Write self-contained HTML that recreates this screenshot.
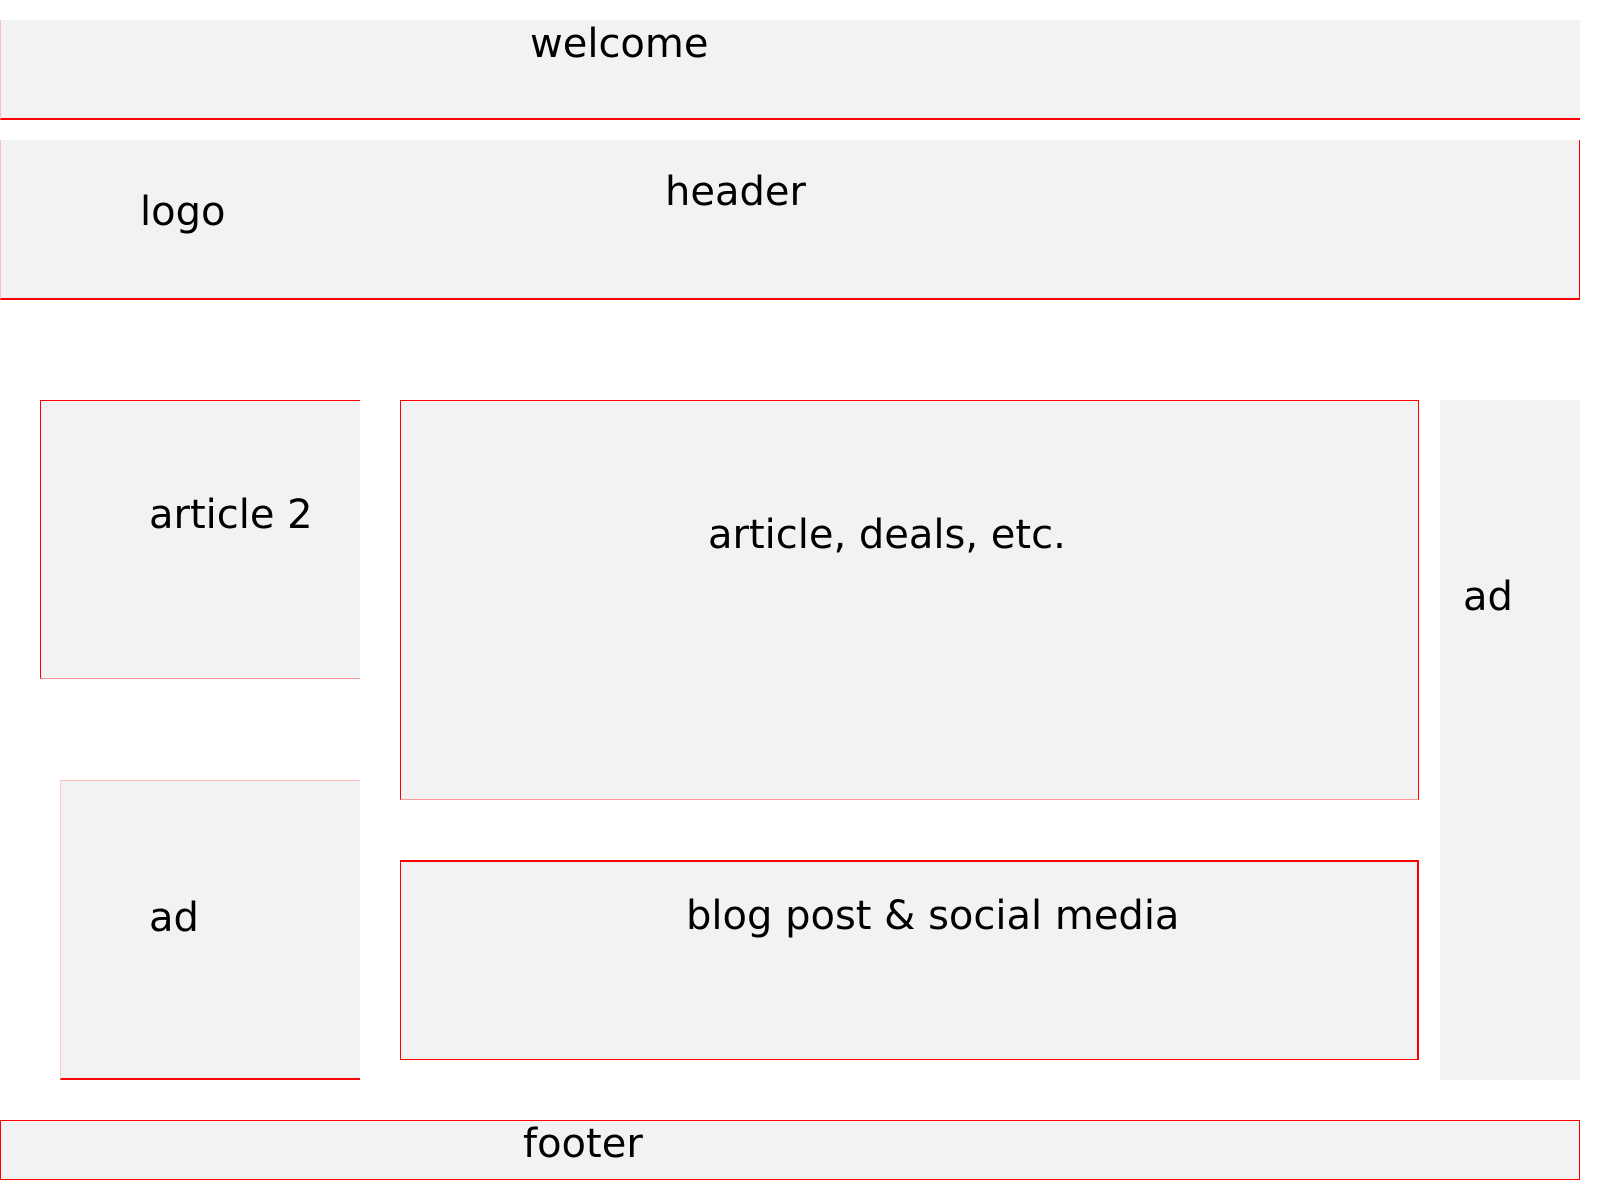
<!DOCTYPE html>
<html><head><meta charset="utf-8"><style>
html,body{margin:0;padding:0;background:#fff;width:1600px;height:1200px;overflow:hidden}
.b{position:absolute;background:#f2f2f2;box-sizing:border-box}
.t{position:absolute;font-family:"DejaVu Sans","Liberation Sans",sans-serif;font-size:40px;line-height:40px;color:#000;white-space:nowrap}
</style></head><body>
<div class="b" style="left:0;top:20px;width:1580px;height:100px;border-bottom:2px solid #f00;border-left:1px solid #fbb"></div>
<div class="t" style="left:530px;top:24px">welcome</div>

<div class="b" style="left:0;top:140px;width:1580px;height:160px;border-bottom:2px solid #f00;border-right:1px solid #f00;border-left:1px solid #fbb"></div>
<div class="t" style="left:665px;top:172px">header</div>
<div class="t" style="left:140px;top:192px">logo</div>

<div class="b" style="left:40px;top:400px;width:320px;height:279px;border-top:1px solid #f00;border-left:1px solid #f00;border-bottom:1px solid #f99"></div>
<div class="t" style="left:149px;top:495px">article 2</div>

<div class="b" style="left:400px;top:400px;width:1019px;height:400px;border:1px solid #f00;border-bottom-color:#f99"></div>
<div class="t" style="left:708px;top:515px">article, deals, etc.</div>

<div class="b" style="left:60px;top:780px;width:300px;height:300px;border-top:1px solid #fbb;border-left:1px solid #fcc;border-bottom:2px solid #f00"></div>
<div class="t" style="left:149px;top:898px">ad</div>

<div class="b" style="left:400px;top:860px;width:1019px;height:200px;border:2px solid #f00;border-left-width:1px;border-bottom-width:1px"></div>
<div class="t" style="left:686px;top:896px">blog post &amp; social media</div>

<div class="b" style="left:1440px;top:400px;width:140px;height:680px"></div>
<div class="t" style="left:1463px;top:577px">ad</div>

<div class="b" style="left:0;top:1120px;width:1580px;height:60px;border:1px solid #f00"></div>
<div class="t" style="left:523px;top:1124px">footer</div>
</body></html>
